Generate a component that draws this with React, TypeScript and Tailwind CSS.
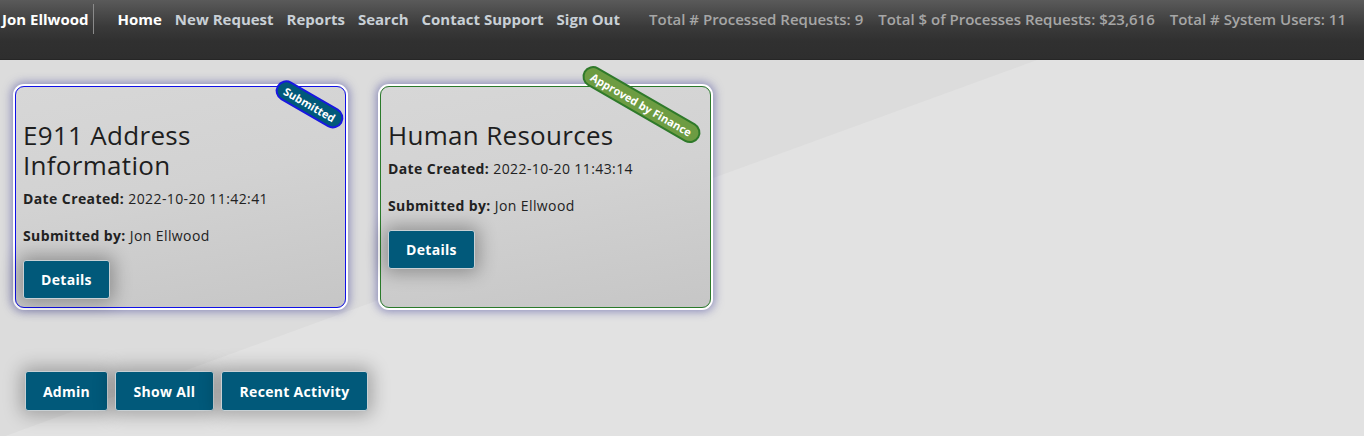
import React from "react";

const font = { fontFamily: '"Open Sans", "Liberation Sans", sans-serif' };

function Badge({ text, color, border, className }: { text: string; color: string; border: string; className: string }) {
  return (
    <div
      className={`absolute rounded-full border-2 px-[7px] py-[1px] text-[11px] font-bold leading-[15px] text-white whitespace-nowrap ${color} ${border} ${className}`}
    >
      {text}
    </div>
  );
}

function DetailsBtn() {
  return (
    <button className="h-[39px] w-[87px] rounded-[3px] border border-[#c8d0d4] bg-[#01597a] text-[14px] font-bold tracking-[0.3px] text-white shadow-[0_0_18px_4px_rgba(0,0,0,0.3)]">
      Details
    </button>
  );
}

function Card({
  title,
  date,
  borderColor,
  badge,
}: {
  title: React.ReactNode;
  date: string;
  borderColor: string;
  badge: React.ReactNode;
}) {
  return (
    <div
      className={`relative h-[222px] w-[331px] rounded-[9px] border ${borderColor} bg-[linear-gradient(170deg,#d7d7d7_0%,#d2d2d2_45%,#c6c6c6_100%)] px-[7px] shadow-[0_0_0_2px_#ffffff,0_0_9px_4px_rgba(80,80,160,0.55)]`}
    >
      {badge}
      <div className="pt-[33px] text-[26px] leading-[30px] tracking-[0.3px] text-[#1e1e1e]">{title}</div>
      <div className="mt-[9px] text-[14px] leading-[20px] tracking-[0.4px] text-[#222]">
        <span className="font-bold">Date Created:</span> {date}
      </div>
      <div className="mt-[17px] text-[14px] leading-[20px] tracking-[0.4px] text-[#222]">
        <span className="font-bold">Submitted by:</span> Jon Ellwood
      </div>
      <div className="mt-[14px]">
        <DetailsBtn />
      </div>
    </div>
  );
}

export default function App() {
  return (
    <div style={font} className="relative min-h-[436px] w-full overflow-hidden bg-[#e2e2e2]">
      <div className="absolute left-0 top-[60px] h-[380px] w-[1040px] bg-[#dcdcdc] [clip-path:polygon(0_0,1037px_0,0_378px)]" />
      <header className="relative h-[60px] border-b border-[#262626] bg-[linear-gradient(180deg,#5a5a5a_0%,#3a3a3a_45%,#303030_70%,#2e2e2e_100%)]">
        <div className="flex h-[38px] items-center whitespace-nowrap text-[15px]">
          <div className="pl-[2px] pr-[5px] font-bold text-white">Jon Ellwood</div>
          <div className="h-[30px] w-px bg-[#8a8a8a]" />
          <nav className="ml-[23px] flex gap-[13px] font-bold text-[#c9d0d6]">
            <span className="text-white">Home</span>
            <span>New Request</span>
            <span>Reports</span>
            <span>Search</span>
            <span>Contact Support</span>
            <span>Sign Out</span>
          </nav>
          <div className="ml-[29px] flex gap-[15px] font-semibold text-[#a6a6a6]">
            <span>Total # Processed Requests: 9</span>
            <span>Total $ of Processes Requests: $23,616</span>
            <span>Total # System Users: 11</span>
          </div>
        </div>
      </header>
      <main className="relative px-[15px] pt-[26px]">
        <div className="flex gap-[34px]">
          <Card
            title={
              <>
                <div>E911 Address</div>
                <div>Information</div>
              </>
            }
            date="2022-10-20 11:42:41"
            borderColor="border-[#1010e8]"
            badge={
              <Badge
                text="Submitted"
                color="bg-[#01597a]"
                border="border-[#1818e0]"
                className="right-[-2px] top-[7px] rotate-[30deg]"
              />
            }
          />
          <Card
            title="Human Resources"
            date="2022-10-20 11:43:14"
            borderColor="border-[#2a7a2a]"
            badge={
              <Badge
                text="Approved by Finance"
                color="bg-[#6d9c42]"
                border="border-[#2f7a2a]"
                className="right-[2px] top-[7px] rotate-[30deg]"
              />
            }
          />
        </div>
        <div className="mt-[63px] ml-[10px] flex gap-[7px] pb-[25px]">
          {["Admin", "Show All", "Recent Activity"].map((t, i) => (
            <button
              key={t}
              className={`h-[40px] rounded-[3px] border border-[#c8d0d4] bg-[#01597a] text-[14px] font-bold tracking-[0.3px] text-white shadow-[0_0_18px_4px_rgba(0,0,0,0.28)] ${
                i === 0 ? "w-[83px]" : i === 1 ? "w-[99px]" : "w-[147px]"
              }`}
            >
              {t}
            </button>
          ))}
        </div>
      </main>
    </div>
  );
}
